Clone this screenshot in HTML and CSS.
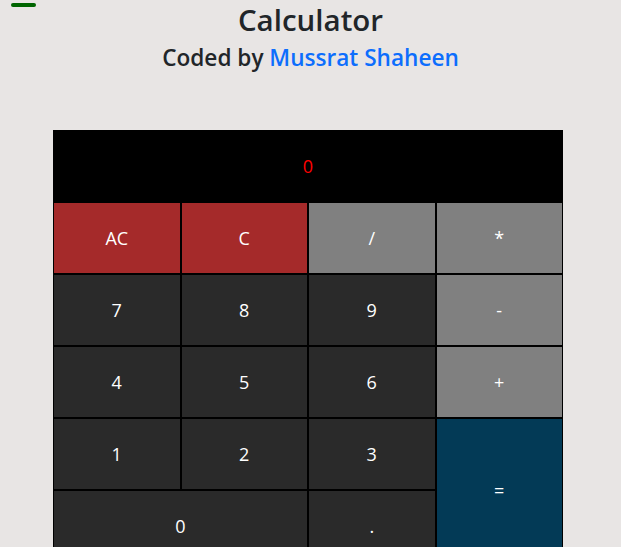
FILE: index.html
```html
<!DOCTYPE html>
<html>
<head>
<meta charset="utf-8">
<link rel="stylesheet" href="styles.css">
</head>
<body>
<div class="bar"></div>
<header class="head">
  <h1 class="title">Calculator</h1>
  <h2 class="byline">Coded by <a href="#" class="author">Mussrat Shaheen</a></h2>
</header>
<main class="calc">
  <div class="display">0</div>
  <button class="key red">AC</button>
  <button class="key red">C</button>
  <button class="key gray">/</button>
  <button class="key gray">*</button>
  <button class="key dark">7</button>
  <button class="key dark">8</button>
  <button class="key dark">9</button>
  <button class="key gray">-</button>
  <button class="key dark">4</button>
  <button class="key dark">5</button>
  <button class="key dark">6</button>
  <button class="key gray">+</button>
  <button class="key dark">1</button>
  <button class="key dark">2</button>
  <button class="key dark">3</button>
  <button class="key blue equals">=</button>
  <button class="key dark zero">0</button>
  <button class="key dark">.</button>
</main>
</body>
</html>
```
FILE: styles.css
```css
* { box-sizing: border-box; }
html, body {
  margin: 0;
  padding: 0;
  background: #e8e5e4;
  font-family: "Open Sans", "Noto Sans", sans-serif;
  color: #212529;
}
.bar {
  position: absolute;
  left: 11px;
  top: 3px;
  width: 25px;
  height: 4px;
  border-radius: 2px;
  background: #006400;
}
.head {
  text-align: center;
}
.title {
  margin: 0;
  font-size: 29.5px;
  font-weight: 600;
  line-height: 40px;
}
.byline {
  margin: 3px 0 0;
  font-size: 22.6px;
  font-weight: 600;
  line-height: 30px;
}
.author {
  color: #0d6efd;
  text-decoration: none;
}
.calc {
  margin: 57px 0 0 53px;
  width: 510px;
  background: #000;
  padding: 1px;
  display: grid;
  grid-template-columns: repeat(4, 1fr);
  grid-auto-rows: 70px;
  gap: 2px;
}
.display {
  grid-column: 1 / 5;
  display: flex;
  align-items: center;
  justify-content: center;
  color: #ff0000;
  font-size: 18px;
  background: #000;
}
.key {
  border: 0;
  margin: 0;
  padding: 0;
  font-family: inherit;
  font-size: 18px;
  color: #fff;
}
.red { background: #a52a2a; }
.gray { background: #808080; }
.dark { background: #2a2a2a; }
.blue { background: #033a56; }
.equals { grid-row: span 2; }
.zero { grid-column: span 2; }
```
